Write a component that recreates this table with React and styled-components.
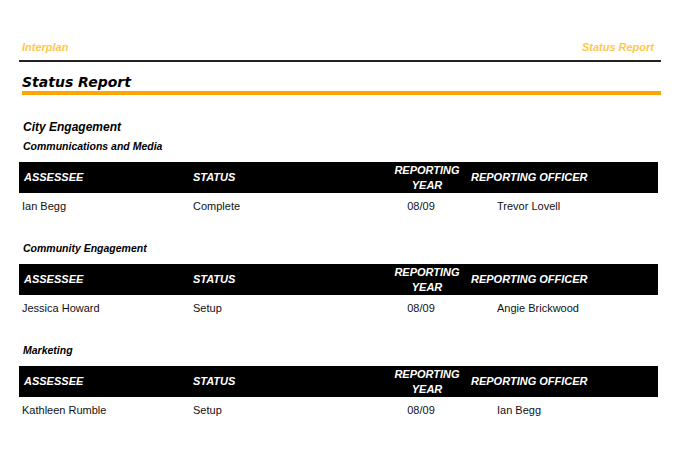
import React from "react";
import styled, { createGlobalStyle } from "styled-components";

const GlobalStyle = createGlobalStyle`
  body {
    margin: 0;
    background: #fff;
    font-family: "Liberation Sans", Arial, sans-serif;
    color: #111;
  }
`;

const sections = [
  {
    title: "Communications and Media",
    rows: [{ assessee: "Ian Begg", status: "Complete", year: "08/09", officer: "Trevor Lovell" }],
  },
  {
    title: "Community Engagement",
    rows: [{ assessee: "Jessica Howard", status: "Setup", year: "08/09", officer: "Angie Brickwood" }],
  },
  {
    title: "Marketing",
    rows: [{ assessee: "Kathleen Rumble", status: "Setup", year: "08/09", officer: "Ian Begg" }],
  },
];

const App = () => {
  return (
    <>
      <GlobalStyle />
      <Page>
        <TopBar>
          <span>Interplan</span>
          <span>Status Report</span>
        </TopBar>
        <Title>Status Report</Title>
        <Group>City Engagement</Group>
        {sections.map((s) => (
          <Section key={s.title}>
            <SectionTitle>{s.title}</SectionTitle>
            <Grid>
              <HeadCell>ASSESSEE</HeadCell>
              <HeadCell>STATUS</HeadCell>
              <HeadCell center>
                REPORTING
                <br />
                YEAR
              </HeadCell>
              <HeadCell officer>REPORTING OFFICER</HeadCell>
              {s.rows.map((r) => (
                <React.Fragment key={r.assessee}>
                  <Cell first>{r.assessee}</Cell>
                  <Cell>{r.status}</Cell>
                  <Cell year>{r.year}</Cell>
                  <Cell officer>{r.officer}</Cell>
                </React.Fragment>
              ))}
            </Grid>
          </Section>
        ))}
      </Page>
    </>
  );
};

const Page = styled.div`
  width: 642px;
  padding: 40px 0 0 19px;
`;

//상단 헤더 (회사명 / 문서명)
const TopBar = styled.div`
  display: flex;
  justify-content: space-between;
  padding: 0 7px 6px 3px;
  font-size: 11px;
  line-height: 14px;
  font-weight: bold;
  font-style: italic;
  color: #ffc84b;
  border-bottom: 2px solid #222;
`;

const Title = styled.h1`
  margin: 11px 0 0 3px;
  padding-bottom: 0;
  font-family: "DejaVu Sans", Verdana, sans-serif;
  font-size: 14px;
  line-height: 18px;
  font-weight: bold;
  font-style: italic;
  color: #000;
  border-bottom: 4px solid #ffa500;
`;

const Group = styled.h2`
  margin: 25px 0 0 4px;
  font-size: 12px;
  line-height: 15px;
  font-weight: bold;
  font-style: italic;
  color: #000;
`;

const Section = styled.section`
  margin-bottom: 28px;
`;

const SectionTitle = styled.h3`
  margin: 4px 0 9px 4px;
  font-size: 10.5px;
  line-height: 14px;
  font-weight: bold;
  font-style: italic;
  color: #000;
`;

const Grid = styled.div`
  display: grid;
  width: 639px;
  grid-template-columns: 169px 204px 70px 1fr;
`;

const HeadCell = styled.div`
  display: flex;
  align-items: center;
  justify-content: ${({ center }) => (center ? "center" : "flex-start")};
  height: 31px;
  padding-left: ${({ officer, center }) => (center ? "0" : officer ? "9px" : "5px")};
  background: #000;
  color: #fff;
  font-size: 11px;
  line-height: 15px;
  font-weight: bold;
  font-style: italic;
  text-align: center;
`;

const Cell = styled.div`
  margin-top: 6px;
  font-size: 11px;
  line-height: 14px;
  padding-left: ${({ first, officer }) => (first ? "3px" : officer ? "35px" : "5px")};
  ${({ year }) =>
    year &&
    `
    padding: 0 12px 0 0;
    text-align: center;
  `}
`;

export default App;
